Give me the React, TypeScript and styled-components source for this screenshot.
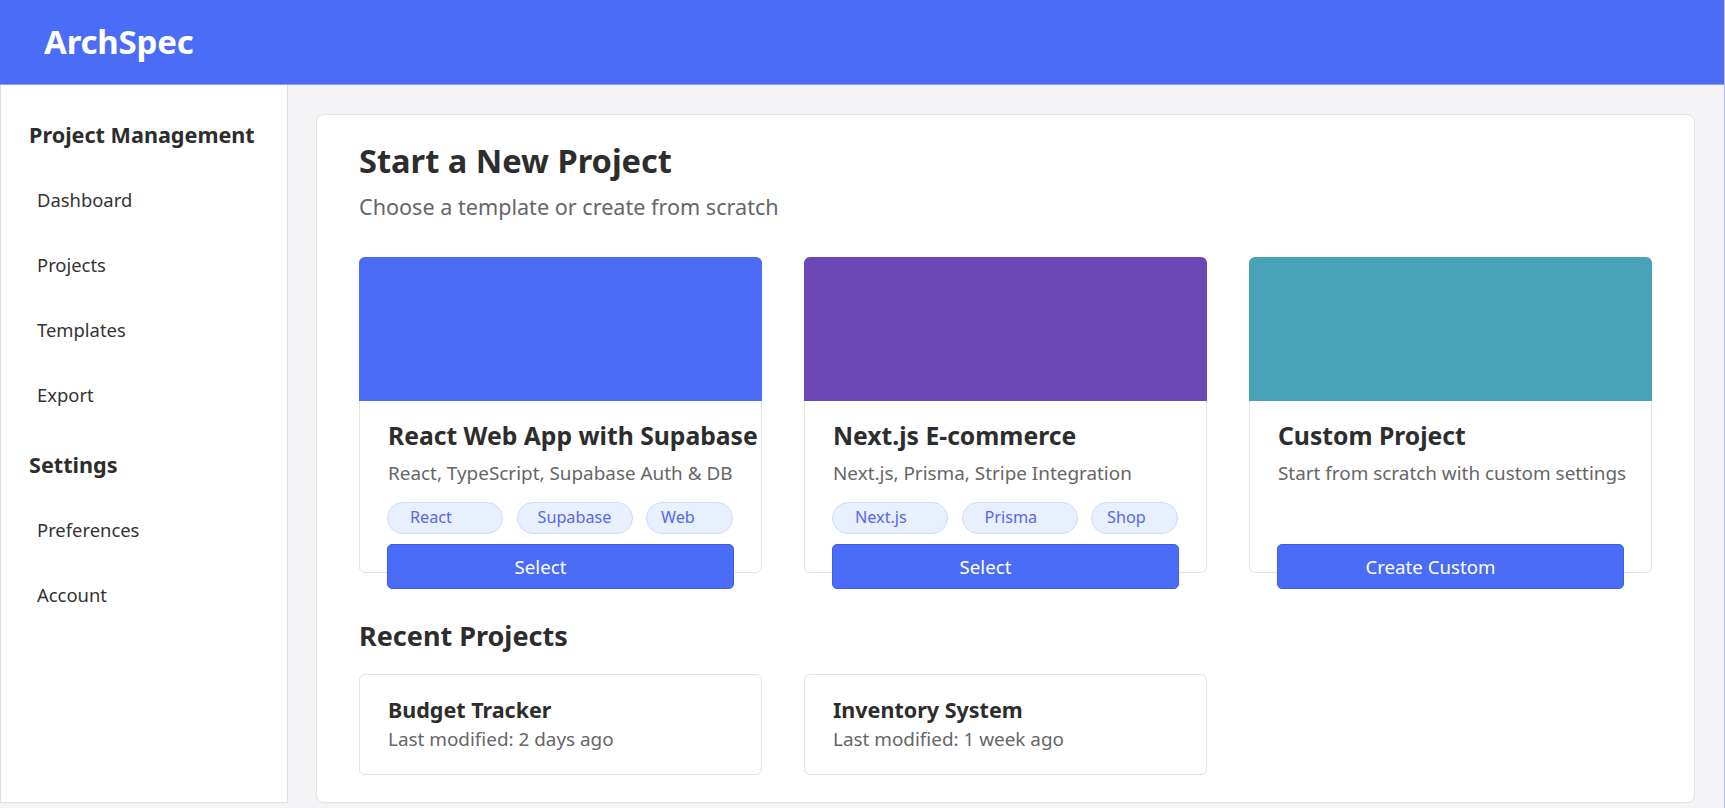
import React from "react";
import styled, { createGlobalStyle } from "styled-components";

const GlobalStyle = createGlobalStyle`
  * { box-sizing: border-box; }
  html, body { margin: 0; padding: 0; }
  body {
    font-family: "Noto Sans", "Open Sans", sans-serif;
    color: #333;
    background: #f4f4f6;
  }
`;

const Page = styled.div`
  width: 1725px;
  min-height: 808px;
  background: #f4f4f6;
  border-right: 1px solid #bcc0f2;
`;

const Header = styled.header`
  height: 85px;
  background: #4a6cf7;
  display: flex;
  align-items: center;
  padding: 0 44px 2px;
  border-bottom: 1px solid #8aa0f6;
`;

const Logo = styled.h1`
  margin: 0;
  color: #fff;
  font-size: 33px;
  font-weight: 700;
  letter-spacing: -0.2px;
`;

const Body = styled.div`
  display: flex;
  height: 718px;
`;

const Sidebar = styled.aside`
  width: 288px;
  flex-shrink: 0;
  background: #fff;
  border: 1px solid #e0e0e0;
  border-top: none;
  padding: 36px 28px;
`;

const SideSection = styled.div`
  & + & { margin-top: 24px; }
`;

const SideTitle = styled.h3`
  margin: 0 0 18px;
  font-size: 21.6px;
  line-height: 28px;
  font-weight: 700;
  color: #2d2d2d;
`;

const NavItem = styled.div`
  font-size: 18.4px;
  line-height: 25px;
  padding: 20px 8px;
  color: #333;
`;

const Main = styled.main`
  flex: 1;
  min-width: 0;
  padding: 29px 29px 0 28px;
  display: flex;
`;

const Panel = styled.section`
  flex: 1;
  min-width: 0;
  background: #fff;
  border: 1px solid #e2e2e2;
  border-radius: 8px;
  padding: 26px 42px 0;
`;

const Title = styled.h2`
  margin: 0;
  font-size: 32.6px;
  line-height: 40px;
  font-weight: 700;
  color: #2d2d2d;
`;

const Subtitle = styled.p`
  margin: 12px 0 0;
  font-size: 21.6px;
  line-height: 28px;
  color: #666;
`;

const Grid = styled.div<{ $top: number }>`
  display: grid;
  grid-template-columns: repeat(3, minmax(0, 1fr));
  gap: 42px;
  margin-top: ${(p) => p.$top}px;
`;

const TemplateCard = styled.div`
  height: 316px;
  border: 1px solid #e2e2e2;
  border-radius: 6px;
  background: #fff;
  display: flex;
  flex-direction: column;
`;

const Banner = styled.div<{ $color: string }>`
  height: 144px;
  margin: -1px -1px 0;
  flex-shrink: 0;
  background: ${(p) => p.$color};
  border-radius: 6px 6px 0 0;
`;

const CardBody = styled.div`
  padding: 19px 27px 0;
`;

const CardTitle = styled.h3`
  margin: 0;
  padding-left: 1px;
  font-size: 24.7px;
  line-height: 32px;
  font-weight: 700;
  color: #2d2d2d;
  white-space: nowrap;
`;

const CardDesc = styled.p`
  margin: 8px 0 0;
  padding-left: 1px;
  font-size: 18.9px;
  line-height: 26px;
  color: #666;
  white-space: nowrap;
`;

const TagRow = styled.div`
  display: grid;
  grid-template-columns: 116px 116px 87px;
  gap: 13.5px;
  min-height: 32px;
  margin-top: 16px;
`;

const Tag = styled.span<{ $pad: number }>`
  height: 32px;
  border-radius: 16px;
  background: #e8effd;
  border: 1.5px solid #cfdcfb;
  color: #5668ef;
  font-size: 16.2px;
  line-height: 29px;
  padding-left: ${(p) => p.$pad}px;
  white-space: nowrap;
`;

const Button = styled.button`
  display: block;
  width: 100%;
  height: 45px;
  margin-top: 10px;
  padding: 0 40px 0 0;
  background: #4a6cf7;
  border: 1px solid #3d5ce8;
  border-radius: 5px;
  color: #fff;
  font-family: inherit;
  font-size: 18.7px;
  text-align: center;
  cursor: pointer;
`;

const SectionTitle = styled.h2`
  margin: 46px 0 0;
  font-size: 27px;
  line-height: 34px;
  font-weight: 700;
  color: #2d2d2d;
`;

const RecentCard = styled.div`
  height: 101px;
  border: 1px solid #e2e2e2;
  border-radius: 6px;
  padding: 21px 28px 0;
`;

const RecentTitle = styled.h4`
  margin: 0;
  font-size: 21.5px;
  line-height: 28px;
  font-weight: 700;
  color: #2d2d2d;
`;

const RecentMeta = styled.p`
  margin: 2px 0 0;
  font-size: 18.9px;
  line-height: 26px;
  color: #666;
`;

type Template = {
  title: string;
  desc: string;
  color: string;
  tags: { label: string; pad: number }[];
  action: string;
};

const templates: Template[] = [
  {
    title: "React Web App with Supabase",
    desc: "React, TypeScript, Supabase Auth & DB",
    color: "#4a6cf7",
    tags: [
      { label: "React", pad: 22 },
      { label: "Supabase", pad: 20 },
      { label: "Web", pad: 14 },
    ],
    action: "Select",
  },
  {
    title: "Next.js E-commerce",
    desc: "Next.js, Prisma, Stripe Integration",
    color: "#6b48b6",
    tags: [
      { label: "Next.js", pad: 22 },
      { label: "Prisma", pad: 22 },
      { label: "Shop", pad: 15 },
    ],
    action: "Select",
  },
  {
    title: "Custom Project",
    desc: "Start from scratch with custom settings",
    color: "#48a3b8",
    tags: [],
    action: "Create Custom",
  },
];

const recent = [
  { title: "Budget Tracker", meta: "Last modified: 2 days ago" },
  { title: "Inventory System", meta: "Last modified: 1 week ago" },
];

export default function App() {
  return (
    <>
      <GlobalStyle />
      <Page>
        <Header>
          <Logo>ArchSpec</Logo>
        </Header>
        <Body>
          <Sidebar>
            <SideSection>
              <SideTitle>Project Management</SideTitle>
              <NavItem>Dashboard</NavItem>
              <NavItem>Projects</NavItem>
              <NavItem>Templates</NavItem>
              <NavItem>Export</NavItem>
            </SideSection>
            <SideSection>
              <SideTitle>Settings</SideTitle>
              <NavItem>Preferences</NavItem>
              <NavItem>Account</NavItem>
            </SideSection>
          </Sidebar>
          <Main>
            <Panel>
              <Title>Start a New Project</Title>
              <Subtitle>Choose a template or create from scratch</Subtitle>
              <Grid $top={36}>
                {templates.map((t) => (
                  <TemplateCard key={t.title}>
                    <Banner $color={t.color} />
                    <CardBody>
                      <CardTitle>{t.title}</CardTitle>
                      <CardDesc>{t.desc}</CardDesc>
                      <TagRow>
                        {t.tags.map((tag) => (
                          <Tag key={tag.label} $pad={tag.pad}>
                            {tag.label}
                          </Tag>
                        ))}
                      </TagRow>
                      <Button>{t.action}</Button>
                    </CardBody>
                  </TemplateCard>
                ))}
              </Grid>
              <SectionTitle>Recent Projects</SectionTitle>
              <Grid $top={21}>
                {recent.map((r) => (
                  <RecentCard key={r.title}>
                    <RecentTitle>{r.title}</RecentTitle>
                    <RecentMeta>{r.meta}</RecentMeta>
                  </RecentCard>
                ))}
              </Grid>
            </Panel>
          </Main>
        </Body>
      </Page>
    </>
  );
}
